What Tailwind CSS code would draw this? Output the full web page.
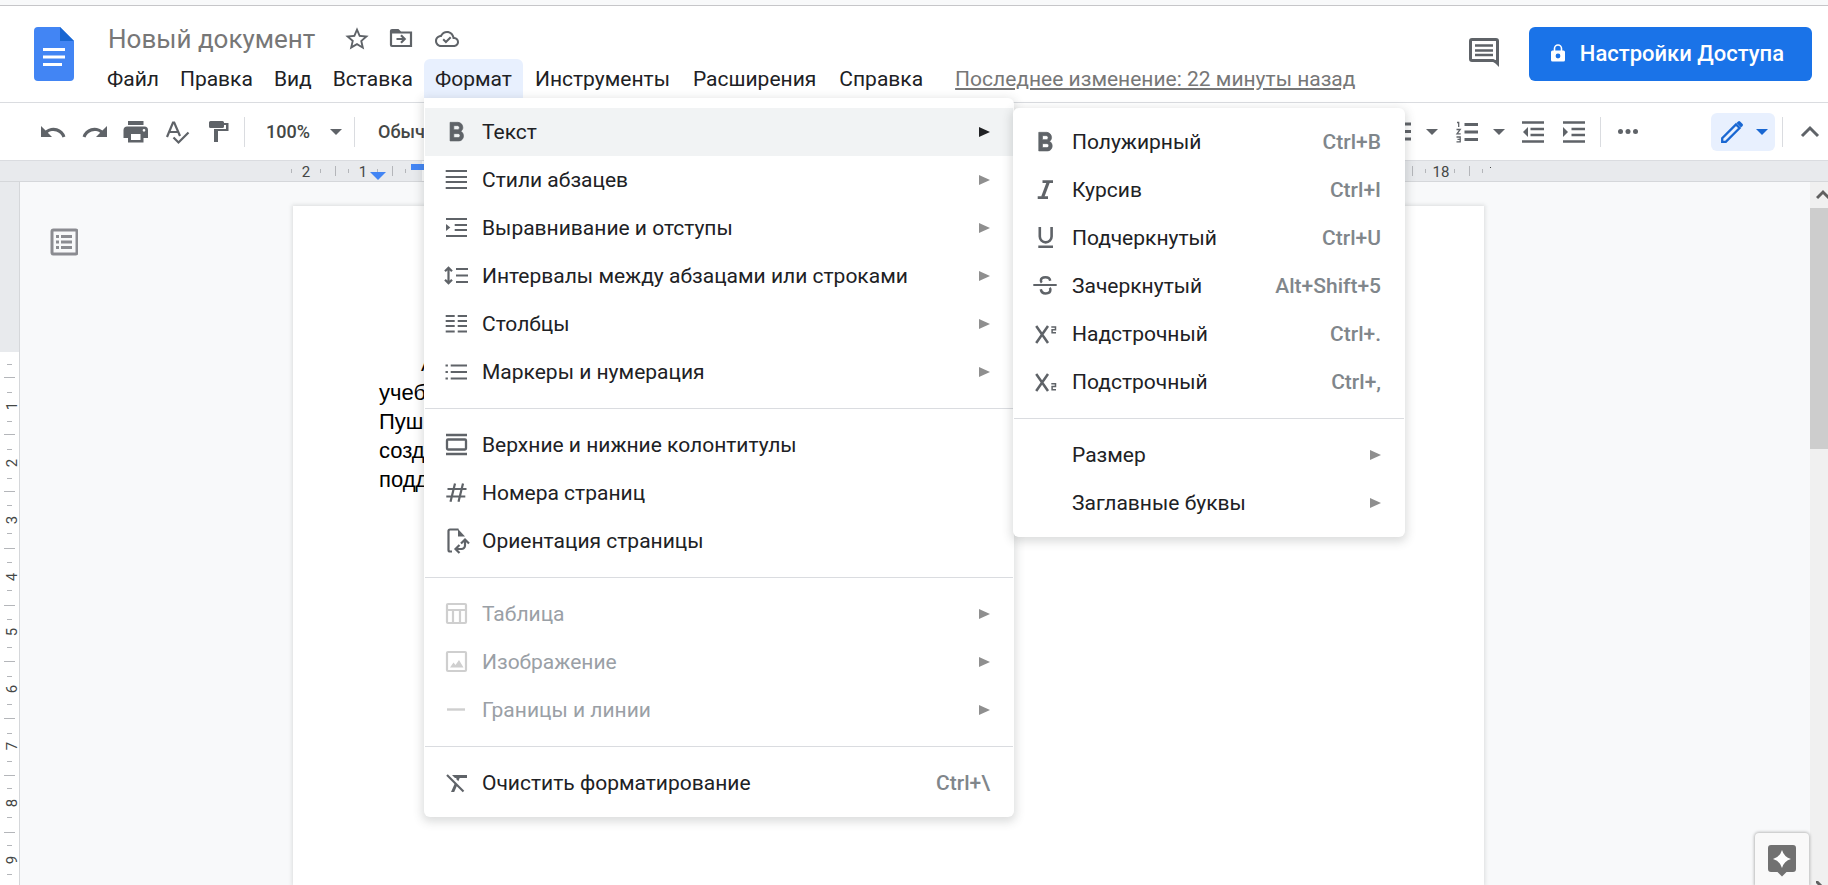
<!DOCTYPE html>
<html lang="ru">
<head>
<meta charset="utf-8">
<title>Новый документ</title>
<script src="https://cdn.jsdelivr.net/npm/@tailwindcss/browser@4"></script>
</head>
<body class="flex h-screen flex-col overflow-hidden bg-white font-[Roboto,sans-serif] text-[#202124]">
<div class="h-[6px] shrink-0 border-b border-[#c6c6c9] bg-[#f8f9fa]"></div>

<header class="relative z-20 flex h-[97px] shrink-0 border-b border-[#dadce0] pr-4">
  <a href="#" aria-label="Документы" class="mt-[21px] ml-[34px] block h-[54px] w-[40px] shrink-0">
    <svg viewBox="0 0 40 54" class="h-[54px] w-[40px]"><path d="M4 0h22l14 14v36a4 4 0 0 1-4 4H4a4 4 0 0 1-4-4V4a4 4 0 0 1 4-4z" fill="#4285f4"/><path d="M26 0l14 14H26z" fill="#1967d2"/><path d="M9 21h22v3H9zM9 28.500h22v3H9zM9 36h19v3H9z" fill="#fff"/></svg>
  </a>
  <div class="ml-[23px] flex flex-col">
    <div class="flex h-[53px] items-center pt-[13px] pl-[11px] text-[#5f6368]">
      <h1 class="text-[26px] leading-8 whitespace-nowrap text-[#777]">Новый документ</h1>
      <div class="ml-[28px] flex gap-[16px]">
        <button aria-label="Пометить" class="flex h-7 w-7 items-center justify-center"><svg viewBox="0 0 24 24" class="h-7 w-7" fill="currentColor"><path d="M22 9.240l-7.190-.62L12 2 9.190 8.630 2 9.240l5.460 4.730L5.820 21 12 17.270 18.180 21l-1.630-7.030L22 9.240zM12 15.400l-3.760 2.270 1-4.280-3.320-2.880 4.380-.38L12 6.100l1.710 4.040 4.380.38-3.320 2.880 1 4.280L12 15.400z"/></svg></button>
        <button aria-label="Переместить" class="flex h-7 w-7 items-center justify-center"><svg viewBox="0 0 28 28" class="h-7 w-7" fill="none" stroke="currentColor" stroke-width="2.200"><path d="M4 7.500h20v13.500H5a1 1 0 0 1-1-1V6a1 1 0 0 1 1-1h6l2.500 2.500"/><path d="M4 5h7l2.500 3H4z" fill="currentColor" stroke="none"/><path d="M9.500 14h8M14 10.300l3.700 3.700-3.700 3.700"/></svg></button>
        <button aria-label="Сохранено" class="flex h-7 w-8 items-center justify-center"><svg viewBox="0 0 24 24" class="h-6 w-6" fill="currentColor"><path d="M19.350 10.040C18.670 6.590 15.640 4 12 4 9.110 4 6.600 5.640 5.350 8.040 2.340 8.360 0 10.910 0 14c0 3.310 2.690 6 6 6h13c2.760 0 5-2.240 5-5 0-2.640-2.050-4.780-4.650-4.960zM19 18H6c-2.210 0-4-1.790-4-4 0-2.050 1.530-3.760 3.560-3.970l1.070-.11.5-.95C8.080 7.140 9.940 6 12 6c2.620 0 4.880 1.860 5.390 4.430l.3 1.500 1.530.11c1.560.1 2.780 1.410 2.780 2.960 0 1.650-1.350 3-3 3z"/><path d="M8.200 12.300l2.700 2.700 4.800-4.800" fill="none" stroke="currentColor" stroke-width="2"/></svg></button>
      </div>
    </div>
    <nav class="flex gap-px text-[21px] leading-[37px] whitespace-nowrap">
      <button class="px-[10px] pt-[2px]">Файл</button>
      <button class="px-[10px] pt-[2px]">Правка</button>
      <button class="px-[10px] pt-[2px]">Вид</button>
      <button class="px-[10px] pt-[2px]">Вставка</button>
      <div class="relative">
        <button class="rounded-t-md bg-[#e8f0fe] px-[11px] pt-[2px]">Формат</button>
        <!-- Format menu -->
        <ul class="absolute top-full left-0 w-[590px] rounded-md rounded-tl-none border-x border-transparent bg-white py-[10px] text-[21px] leading-[48px] shadow-[0_3px_10px_2px_rgba(60,64,67,0.18)]">
          <li class="relative">
            <button class="flex h-12 w-full items-center bg-[#f1f3f4] pr-[23px] pl-[17px] text-left">
              <svg viewBox="0 0 28 28" class="mr-3 h-7 w-7 text-[#5f6368]" fill="currentColor"><path transform="translate(-.7 -1) scale(1.250 1.330)" d="M15.600 10.790c.97-.67 1.650-1.770 1.650-2.790 0-2.260-1.750-4-4-4H7v14h7.040c2.090 0 3.710-1.700 3.710-3.790 0-1.520-.86-2.820-2.150-3.420zM10 6.500h3c.83 0 1.500.67 1.500 1.500s-.67 1.500-1.500 1.500h-3v-3zm3.500 9H10v-3h3.500c.83 0 1.500.67 1.500 1.500s-.67 1.500-1.500 1.500z" stroke="currentColor" stroke-width=".5"/></svg>
              <span class="grow">Текст</span>
              <svg viewBox="0 0 11 10" class="h-[10px] w-[11px]" fill="#202124"><path d="M0 0l11 5-11 5z"/></svg>
            </button>
            <!-- Text submenu -->
            <ul class="absolute top-0 left-full w-[392px] rounded-md bg-white py-[10px] shadow-[0_3px_10px_2px_rgba(60,64,67,0.18)]">
              <li><button class="flex h-12 w-full items-center pr-6 pl-[19px] text-left"><svg viewBox="0 0 28 28" class="mr-3 h-7 w-7 text-[#5f6368]" fill="currentColor"><path transform="translate(-2 -1) scale(1.250 1.330)" d="M15.600 10.790c.97-.67 1.650-1.770 1.650-2.790 0-2.260-1.750-4-4-4H7v14h7.040c2.090 0 3.710-1.700 3.710-3.790 0-1.520-.86-2.820-2.150-3.420zM10 6.500h3c.83 0 1.500.67 1.500 1.500s-.67 1.500-1.500 1.500h-3v-3zm3.500 9H10v-3h3.500c.83 0 1.500.67 1.500 1.500s-.67 1.500-1.500 1.500z" stroke="currentColor" stroke-width=".5"/></svg><span class="grow">Полужирный</span><span class="font-medium text-[#80868b]">Ctrl+B</span></button></li>
              <li><button class="flex h-12 w-full items-center pr-6 pl-[19px] text-left"><svg viewBox="0 0 28 28" class="mr-3 h-7 w-7 text-[#5f6368]" fill="none" stroke="currentColor" stroke-width="2.700"><path d="M10.500 5.700H21M5.700 21.700H16"/><path d="M16.300 6l-5.600 15" stroke-width="3.200"/></svg><span class="grow">Курсив</span><span class="font-medium text-[#80868b]">Ctrl+I</span></button></li>
              <li><button class="flex h-12 w-full items-center pr-6 pl-[19px] text-left"><svg viewBox="0 0 28 28" class="mr-3 h-7 w-7 text-[#5f6368]" fill="none" stroke="currentColor" stroke-width="2.600"><path d="M7.800 3v9.500a5.900 5.900 0 0 0 11.800 0V3M6.300 22.800H21"/></svg><span class="grow">Подчеркнутый</span><span class="font-medium text-[#80868b]">Ctrl+U</span></button></li>
              <li><button class="flex h-12 w-full items-center pr-6 pl-[19px] text-left"><svg viewBox="0 0 28 28" class="mr-3 h-7 w-7 text-[#5f6368]" fill="none" stroke="currentColor" stroke-width="2.500"><path d="M1.300 13h23.400" stroke-width="2"/><path d="M18.200 8.700c-.4-2.300-2.300-3.400-4.700-3.400-2.700 0-4.600 1.300-4.600 3.300 0 .9.300 1.500.9 2.100M8.800 17.200c.4 2.700 2.200 4.200 4.900 4.200 2.900 0 4.700-1.400 4.700-3.600 0-.9-.3-1.500-.8-2"/></svg><span class="grow">Зачеркнутый</span><span class="font-medium text-[#80868b]">Alt+Shift+5</span></button></li>
              <li><button class="flex h-12 w-full items-center pr-6 pl-[19px] text-left"><svg viewBox="0 0 28 28" class="mr-3 h-7 w-7 text-[#5f6368]" fill="none" stroke="currentColor" stroke-width="2.500"><path d="M4.200 6l11.800 17M16 6L4.200 23"/><path d="M19.300 7h4.200v2.800h-3.400v2.900H24" stroke-width="1.500"/></svg><span class="grow">Надстрочный</span><span class="font-medium text-[#80868b]">Ctrl+.</span></button></li>
              <li><button class="flex h-12 w-full items-center pr-6 pl-[19px] text-left"><svg viewBox="0 0 28 28" class="mr-3 h-7 w-7 text-[#5f6368]" fill="none" stroke="currentColor" stroke-width="2.500"><path d="M4.200 6l11.800 17M16 6L4.200 23"/><path d="M19.300 15.800h4.200v2.800h-3.400v3.100H24" stroke-width="1.500"/></svg><span class="grow">Подстрочный</span><span class="font-medium text-[#80868b]">Ctrl+,</span></button></li>
              <li role="separator" class="mx-px my-3 h-px bg-[#dadce0]"></li>
              <li><button class="flex h-12 w-full items-center pr-6 pl-[59px] text-left"><span class="grow">Размер</span><svg viewBox="0 0 11 10" class="h-[10px] w-[11px]" fill="#8f8f8f"><path d="M0 0l11 5-11 5z"/></svg></button></li>
              <li><button class="flex h-12 w-full items-center pr-6 pl-[59px] text-left"><span class="grow">Заглавные буквы</span><svg viewBox="0 0 11 10" class="h-[10px] w-[11px]" fill="#8f8f8f"><path d="M0 0l11 5-11 5z"/></svg></button></li>
            </ul>
          </li>
          <li><button class="flex h-12 w-full items-center pr-[23px] pl-[17px] text-left"><svg viewBox="0 0 28 28" class="mr-3 h-7 w-7 text-[#5f6368]" fill="none" stroke="currentColor" stroke-width="2.200"><path d="M3.700 5H25M3.700 11H25M3.700 16H25M3.700 22H25"/></svg><span class="grow">Стили абзацев</span><svg viewBox="0 0 11 10" class="h-[10px] w-[11px]" fill="#8f8f8f"><path d="M0 0l11 5-11 5z"/></svg></button></li>
          <li><button class="flex h-12 w-full items-center pr-[23px] pl-[17px] text-left"><svg viewBox="0 0 28 28" class="mr-3 h-7 w-7 text-[#5f6368]" fill="none" stroke="currentColor" stroke-width="2.200"><path d="M4 5h21M12.700 11H25M12.700 16H25M4 22h21"/><path d="M4 10l4.300 3.500L4 17z" fill="currentColor" stroke="none"/></svg><span class="grow">Выравнивание и отступы</span><svg viewBox="0 0 11 10" class="h-[10px] w-[11px]" fill="#8f8f8f"><path d="M0 0l11 5-11 5z"/></svg></button></li>
          <li><button class="flex h-12 w-full items-center pr-[23px] pl-[17px] text-left"><svg viewBox="0 0 28 28" class="mr-3 h-7 w-7 text-[#5f6368]" fill="none" stroke="currentColor" stroke-width="2.200"><path d="M14 7h12M14 13.500h12M14 20h12M6.500 6v15M3 9.300l3.500-3.500L10 9.300M3 17.700l3.500 3.500 3.500-3.500"/></svg><span class="grow">Интервалы между абзацами или строками</span><svg viewBox="0 0 11 10" class="h-[10px] w-[11px]" fill="#8f8f8f"><path d="M0 0l11 5-11 5z"/></svg></button></li>
          <li><button class="flex h-12 w-full items-center pr-[23px] pl-[17px] text-left"><svg viewBox="0 0 28 28" class="mr-3 h-7 w-7 text-[#5f6368]" fill="none" stroke="currentColor" stroke-width="2.200"><path d="M3.700 6h9M3.700 11h9M3.700 16h9M3.700 21.500h9M15.700 6H25M15.700 11H25M15.700 16H25M15.700 21.500H25"/></svg><span class="grow">Столбцы</span><svg viewBox="0 0 11 10" class="h-[10px] w-[11px]" fill="#8f8f8f"><path d="M0 0l11 5-11 5z"/></svg></button></li>
          <li><button class="flex h-12 w-full items-center pr-[23px] pl-[17px] text-left"><svg viewBox="0 0 28 28" class="mr-3 h-7 w-7 text-[#5f6368]" fill="none" stroke="currentColor" stroke-width="2.200"><path d="M8.700 7.500H25M8.700 14H25M8.700 20.500H25M3.500 7.500h2.400M3.500 14h2.400M3.500 20.500h2.400"/></svg><span class="grow">Маркеры и нумерация</span><svg viewBox="0 0 11 10" class="h-[10px] w-[11px]" fill="#8f8f8f"><path d="M0 0l11 5-11 5z"/></svg></button></li>
          <li role="separator" class="my-3 h-px bg-[#dadce0]"></li>
          <li><button class="flex h-12 w-full items-center pr-[23px] pl-[17px] text-left"><svg viewBox="0 0 28 28" class="mr-3 h-7 w-7 text-[#5f6368]" fill="none" stroke="currentColor" stroke-width="2.300"><path d="M4 4h21M4 23h21"/><rect x="5" y="8.500" width="19" height="10" rx="1"/></svg><span class="grow">Верхние и нижние колонтитулы</span></button></li>
          <li><button class="flex h-12 w-full items-center pr-[23px] pl-[17px] text-left"><svg viewBox="0 0 28 28" class="mr-3 h-7 w-7 text-[#5f6368]" fill="none" stroke="currentColor" stroke-width="2.200"><path d="M5.500 10h19M4.300 17.500h19M13 4.500L8.500 22.700M21 4.500l-4.500 18.200"/></svg><span class="grow">Номера страниц</span></button></li>
          <li><button class="flex h-12 w-full items-center pr-[23px] pl-[17px] text-left"><svg viewBox="0 0 28 28" class="mr-3 h-7 w-7 text-[#5f6368]" fill="none" stroke="currentColor" stroke-width="2.200"><path d="M10 24.500H8a1.500 1.500 0 0 1-1.500-1.500V4A1.500 1.500 0 0 1 8 2.500h8.500"/><path d="M16 2l7 7.500h-7z" fill="currentColor" stroke="none"/><path d="M15 22h4.500a3.500 3.500 0 0 0 3.500-3.500V14M17.500 18l-4 4 4 4M19 16.500l4-4 4 4"/></svg><span class="grow">Ориентация страницы</span></button></li>
          <li role="separator" class="my-3 h-px bg-[#dadce0]"></li>
          <li><button disabled class="flex h-12 w-full items-center pr-[23px] pl-[17px] text-left text-[#9aa0a6]"><svg viewBox="0 0 28 28" class="mr-3 h-7 w-7 text-[#cfcfcf]" fill="none" stroke="currentColor" stroke-width="2.200"><rect x="5" y="4" width="19" height="19" rx="1"/><path d="M5 10h19M11 10v13M18 10v13"/></svg><span class="grow">Таблица</span><svg viewBox="0 0 11 10" class="h-[10px] w-[11px]" fill="#8f8f8f"><path d="M0 0l11 5-11 5z"/></svg></button></li>
          <li><button disabled class="flex h-12 w-full items-center pr-[23px] pl-[17px] text-left text-[#9aa0a6]"><svg viewBox="0 0 28 28" class="mr-3 h-7 w-7 text-[#cfcfcf]" fill="none" stroke="currentColor" stroke-width="2.200"><rect x="5" y="4" width="19" height="19" rx="1"/><path d="M8 19.500l3.500-5 2 2.500 3.500-5 4.500 7.500z" fill="currentColor" stroke="none"/></svg><span class="grow">Изображение</span><svg viewBox="0 0 11 10" class="h-[10px] w-[11px]" fill="#8f8f8f"><path d="M0 0l11 5-11 5z"/></svg></button></li>
          <li><button disabled class="flex h-12 w-full items-center pr-[23px] pl-[17px] text-left text-[#9aa0a6]"><svg viewBox="0 0 28 28" class="mr-3 h-7 w-7 text-[#cfcfcf]" fill="none" stroke="currentColor" stroke-width="2.400"><path d="M5 13.500h18"/></svg><span class="grow">Границы и линии</span><svg viewBox="0 0 11 10" class="h-[10px] w-[11px]" fill="#8f8f8f"><path d="M0 0l11 5-11 5z"/></svg></button></li>
          <li role="separator" class="my-3 h-px bg-[#dadce0]"></li>
          <li><button class="flex h-12 w-full items-center pr-[23px] pl-[17px] text-left"><svg viewBox="0 0 28 28" class="mr-3 h-7 w-7 text-[#5f6368]" fill="currentColor"><path d="M10 6h15v3h-7.300l-1.400 3.200-2.200-2.200.5-1H13zM13 14l2.200 2.200L12.200 23H9z"/><path d="M5 6l16.500 16.500" fill="none" stroke="currentColor" stroke-width="2.200"/></svg><span class="grow">Очистить форматирование</span><span class="font-medium text-[#80868b]">Ctrl+\</span></button></li>
        </ul>
      </div>
      <button class="px-[11px] pt-[2px]">Инструменты</button>
      <button class="px-[11px] pt-[2px]">Расширения</button>
      <button class="px-[11px] pt-[2px]">Справка</button>
      <a href="#" class="ml-[20px] pt-[2px] text-[#777] underline underline-offset-2">Последнее изменение: 22 минуты назад</a>
    </nav>
  </div>
  <div class="ml-auto flex items-start pt-[21px]">
    <button aria-label="Комментарии" class="mt-2 mr-[27px]"><svg viewBox="0 0 36 36" class="h-9 w-9" fill="none" stroke="#5f6368" stroke-width="3"><path d="M31.500 27.500V6a1.500 1.500 0 0 0-1.500-1.500H6A1.500 1.500 0 0 0 4.500 6v18A1.500 1.500 0 0 0 6 25.500h21z"/><path d="M26 25h7v7z" fill="#5f6368" stroke="none"/><path d="M9 10.500h18M9 15.500h18M9 20h18" stroke-width="2.500"/></svg></button>
    <button class="flex h-[54px] items-center gap-[15px] rounded-md bg-[#1a73e8] pr-[28px] pb-[2px] pl-[22px] text-[22px] font-medium whitespace-nowrap text-white"><svg viewBox="0 0 14 18" class="h-[18px] w-[14px]"><path d="M3.500 7V4.500a3.500 3.500 0 0 1 7 0V7" fill="none" stroke="#fff" stroke-width="1.600"/><path fill-rule="evenodd" d="M1.500 6.500h11A1.500 1.500 0 0 1 14 8v8a1.500 1.500 0 0 1-1.500 1.500h-11A1.500 1.500 0 0 1 0 16V8a1.500 1.500 0 0 1 1.500-1.500zM7 9.600a2.400 2.400 0 1 0 0 4.800 2.400 2.400 0 0 0 0-4.800z" fill="#fff"/></svg>Настройки Доступа</button>
  </div>
</header>

<div class="flex h-[58px] shrink-0 items-center border-b border-[#dadce0] text-[#5f6368]">
  <div class="ml-[39px] flex gap-[14px]">
    <button aria-label="Отменить"><svg viewBox="0 0 28 28" class="h-7 w-7" fill="currentColor"><path d="M2 8v11h11L8.800 14.800A9.500 9.500 0 0 1 23.500 19.500l2.900-1A12.500 12.500 0 0 0 6.600 12.600z"/></svg></button>
    <button aria-label="Повторить"><svg viewBox="0 0 28 28" class="h-7 w-7" fill="currentColor"><path d="M26 8v11H15l4.200-4.200A9.500 9.500 0 0 0 4.500 19.500l-2.900-1A12.500 12.500 0 0 1 21.400 12.600z"/></svg></button>
    <button aria-label="Печать"><svg viewBox="1 0 28 28" class="h-7 w-7" fill="currentColor"><path d="M6 3h15.500v4H6zM5.500 8.500h17a3.500 3.500 0 0 1 3.500 3.500v8h-4.500v4.500H6V20H1.500v-8a3.500 3.500 0 0 1 4-3.500zM9 16v6h9.500v-6zM22 11a1.300 1.300 0 1 0 0 2.700 1.300 1.300 0 0 0 0-2.700z" fill-rule="evenodd"/></svg></button>
    <button aria-label="Правописание"><svg viewBox="1 0 28 28" class="h-7 w-7" fill="none" stroke="currentColor" stroke-width="2.200"><path d="M3 19L9 4.500h1.200L16 18M5.300 14h8.500M9.500 19.500l5 5 10-10"/></svg></button>
    <button aria-label="Копировать форматирование"><svg viewBox="1 0 28 28" class="h-7 w-7" fill="currentColor"><path d="M3 4.500A1.500 1.500 0 0 1 4.500 3h12A1.500 1.500 0 0 1 18 4.500V5h4.500v8H12v11H8V11h12V7h-2v1.500a1.500 1.500 0 0 1-1.500 1.500h-12A1.500 1.500 0 0 1 3 8.500z"/></svg></button>
  </div>
  <div class="ml-[9px] h-[30px] w-px bg-[#dadce0]"></div>
  <label class="ml-[21px] flex items-center"><select aria-label="Масштаб" class="w-16 appearance-none text-[18px] font-medium text-[#444746]"><option>100%</option></select><svg viewBox="0 0 12 6" class="h-[6px] w-[12px]" fill="currentColor"><path d="M0 0h12L6 6z"/></svg></label>
  <div class="ml-[12px] h-[30px] w-px bg-[#dadce0]"></div>
  <select aria-label="Стиль" class="ml-[23px] w-[140px] appearance-none text-[18px] font-medium text-[#444746]"><option>Обычный текст</option></select>
  <div class="ml-auto flex items-center">
    <button aria-label="Маркированный список"><svg viewBox="0 0 28 28" class="h-7 w-7" fill="none" stroke="currentColor" stroke-width="3"><path d="M9 6h16M9 13.500h16M9 21h16M3 6h3M3 13.500h3M3 21h3"/></svg></button>
    <svg viewBox="0 0 12 6" class="ml-[12px] h-[6px] w-[12px]" fill="currentColor"><path d="M0 0h12L6 6z"/></svg>
    <button aria-label="Нумерованный список" class="ml-[15px]"><svg viewBox="0 0 28 28" class="h-7 w-7" fill="none" stroke="currentColor" stroke-width="3"><path d="M11.500 6.500H25M11.500 14H25M11.500 21.500H25"/><path d="M4 4.500h1.700V9M3.500 11.500h3.700L4 15.800h3.700M3.500 19h3.700v4.800H3.500M4.500 21.400h2.700" stroke-width="1.300"/></svg></button>
    <svg viewBox="0 0 12 6" class="ml-[12px] h-[6px] w-[12px]" fill="currentColor"><path d="M0 0h12L6 6z"/></svg>
    <button aria-label="Уменьшить отступ" class="ml-[15px]"><svg viewBox="0 0 28 28" class="h-7 w-7" fill="none" stroke="currentColor" stroke-width="2.600"><path d="M2 4.500h22M10.500 11H24M10.500 17H24M2 23.500h22"/><path d="M8 9v10l-5-5z" fill="currentColor" stroke="none"/></svg></button>
    <button aria-label="Увеличить отступ" class="ml-[13px]"><svg viewBox="0 0 28 28" class="h-7 w-7" fill="none" stroke="currentColor" stroke-width="2.600"><path d="M2 4.500h22M10.500 11H24M10.500 17H24M2 23.500h22"/><path d="M2 9v10l5-5z" fill="currentColor" stroke="none"/></svg></button>
    <div class="ml-[11px] h-[30px] w-px bg-[#dadce0]"></div>
    <button aria-label="Ещё" class="ml-[13px]"><svg viewBox="0 0 28 28" class="h-7 w-7" fill="currentColor"><circle cx="6.500" cy="13.500" r="2.500"/><circle cx="14" cy="13.500" r="2.500"/><circle cx="21.500" cy="13.500" r="2.500"/></svg></button>
    <button aria-label="Режим редактирования" class="ml-[69px] flex h-[38px] w-16 items-center justify-between rounded-md bg-[#e8f0fe] px-[7px] text-[#1967d2]"><svg viewBox="0 0 28 28" class="h-7 w-7" fill="none" stroke="currentColor" stroke-width="2.300"><path d="M4.200 23.800v-3.600L18 6.400l3.600 3.600L7.800 23.800z"/><path d="M18.500 5l1.600-1.600a1.500 1.500 0 0 1 2 0l2.500 2.500a1.500 1.500 0 0 1 0 2L23 9.500z" fill="currentColor" stroke="none"/></svg><svg viewBox="0 0 12 6" class="h-[6px] w-[12px]" fill="currentColor"><path d="M0 0h12L6 6z"/></svg></button>
    <div class="ml-[7px] h-[30px] w-px bg-[#dadce0]"></div>
    <button aria-label="Скрыть меню" class="mr-1 ml-[13px]"><svg viewBox="0 0 28 28" class="h-7 w-7" fill="none" stroke="currentColor" stroke-width="3"><path d="M6 18l8-8 8 8"/></svg></button>
  </div>
</div>

<!-- horizontal ruler -->
<div class="h-[21px] shrink-0 border-b border-[#d5d7da] bg-[#e8eaed]">
  <svg width="1828" height="20" class="block overflow-visible" font-family="Roboto" font-size="15" fill="#444746">
    <path d="M422 0h930v20H422z" fill="#fff"/>
    <path stroke="#b4b6ba" fill="none" d="M291.500 8v4M320.500 8v4M335.500 5v10M348.500 8v4M377.500 8v4M392.500 5v10M405.500 8v4M1412.500 5v10M1425.500 8v4M1454.500 8v4M1469.500 5v10M1482.500 8v4"/>
    <text x="306" y="16" text-anchor="middle">2</text><text x="363" y="16" text-anchor="middle">1</text><text x="1441" y="16" text-anchor="middle">18</text>
    <path d="M370 11h16l-8 8zM411 3h24v6h-24z" fill="#4285f4"/>
    <path d="M1490 6h1v1h-1z"/>
  </svg>
</div>

<main class="flex min-h-0 grow bg-[#f8f9fa]">
  <!-- vertical ruler -->
  <div class="w-[20px] shrink-0 border-r border-[#d5d7da] bg-white">
    <svg width="19" height="703" class="block overflow-visible" font-family="Roboto" font-size="15" fill="#444746">
      <path d="M0 0h19v170H0z" fill="#e8eaed"/>
      <path stroke="#b4b6ba" d="M7 182.500h5M4 195.500h11M7 210.500h5M7 239.500h5M4 252.500h11M7 267.500h5M7 296.500h5M4 309.500h11M7 323.500h5M7 351.500h5M4 366.500h11M7 380.500h5M7 408.500h5M4 423.500h11M7 437.500h5M7 465.500h5M4 479.500h11M7 494.500h5M7 522.500h5M4 536.500h11M7 551.500h5M7 579.500h5M4 593.500h11M7 606.500h5M7 635.500h5M4 650.500h11M7 663.500h5M7 692.500h5"/>
      <g text-anchor="middle">
      <text transform="translate(17 224) rotate(-90)">1</text><text transform="translate(17 281) rotate(-90)">2</text><text transform="translate(17 338) rotate(-90)">3</text><text transform="translate(17 395) rotate(-90)">4</text><text transform="translate(17 450) rotate(-90)">5</text><text transform="translate(17 507) rotate(-90)">6</text><text transform="translate(17 564) rotate(-90)">7</text><text transform="translate(17 621) rotate(-90)">8</text><text transform="translate(17 678) rotate(-90)">9</text></g>
    </svg>
  </div>
  <div class="relative flex grow">
    <button aria-label="Структура документа" class="absolute top-[46px] left-[30px]"><svg viewBox="0 0 28 28" class="h-7 w-7" fill="none" stroke="#8b8c91" stroke-width="3"><rect x="2" y="2" width="25" height="24" rx="1.500"/><path d="M11 8.500h11M11 14h11M11 19.500h11M6 8.500h3M6 14h3M6 19.500h3"/></svg></button>
    <article class="mt-6 ml-[273px] w-[1191px] shrink-0 bg-white pt-[143px] pl-[86px] font-['Liberation_Sans',sans-serif] text-[22px] leading-[29px] text-black shadow-[0_0_4px_1px_rgba(60,64,67,0.15)]">
      <p><span class="pl-[42px]">А</span><br>учеб<br>Пушк<br>созд<br>подд</p>
    </article>
    <button aria-label="Анализ данных" class="absolute right-px bottom-0 flex h-[52px] w-[54px] justify-center rounded-t-sm bg-[#f9f9f9] pt-3 shadow-[0_0_3px_1px_rgba(0,0,0,0.25)]"><svg viewBox="0 0 28 32" class="h-8 w-7"><path d="M3 0h22a3 3 0 0 1 3 3v21a3 3 0 0 1-3 3h-6.500L14 31.500 9.500 27H3a3 3 0 0 1-3-3V3a3 3 0 0 1 3-3z" fill="#717171"/><path d="M14 5q2 7 9 9-7 2-9 9-2-7-9-9 7-2 9-9z" fill="#fff"/></svg></button>
  </div>
  <div class="flex w-[18px] shrink-0 flex-col items-end bg-[#f0f0f0]">
    <svg viewBox="0 0 12 26" class="h-[26px] w-3 shrink-0" fill="none" stroke="#606060" stroke-width="3"><path d="M1 16l6-6 6 6"/></svg>
    <div class="h-[241px] w-full bg-[#cdcdcd]"></div>
    <svg viewBox="0 0 12 4" class="mt-auto h-1 w-3 shrink-0" fill="none" stroke="#606060" stroke-width="3"><path d="M0 0l7 7"/></svg>
  </div>
</main>
</body>
</html>
